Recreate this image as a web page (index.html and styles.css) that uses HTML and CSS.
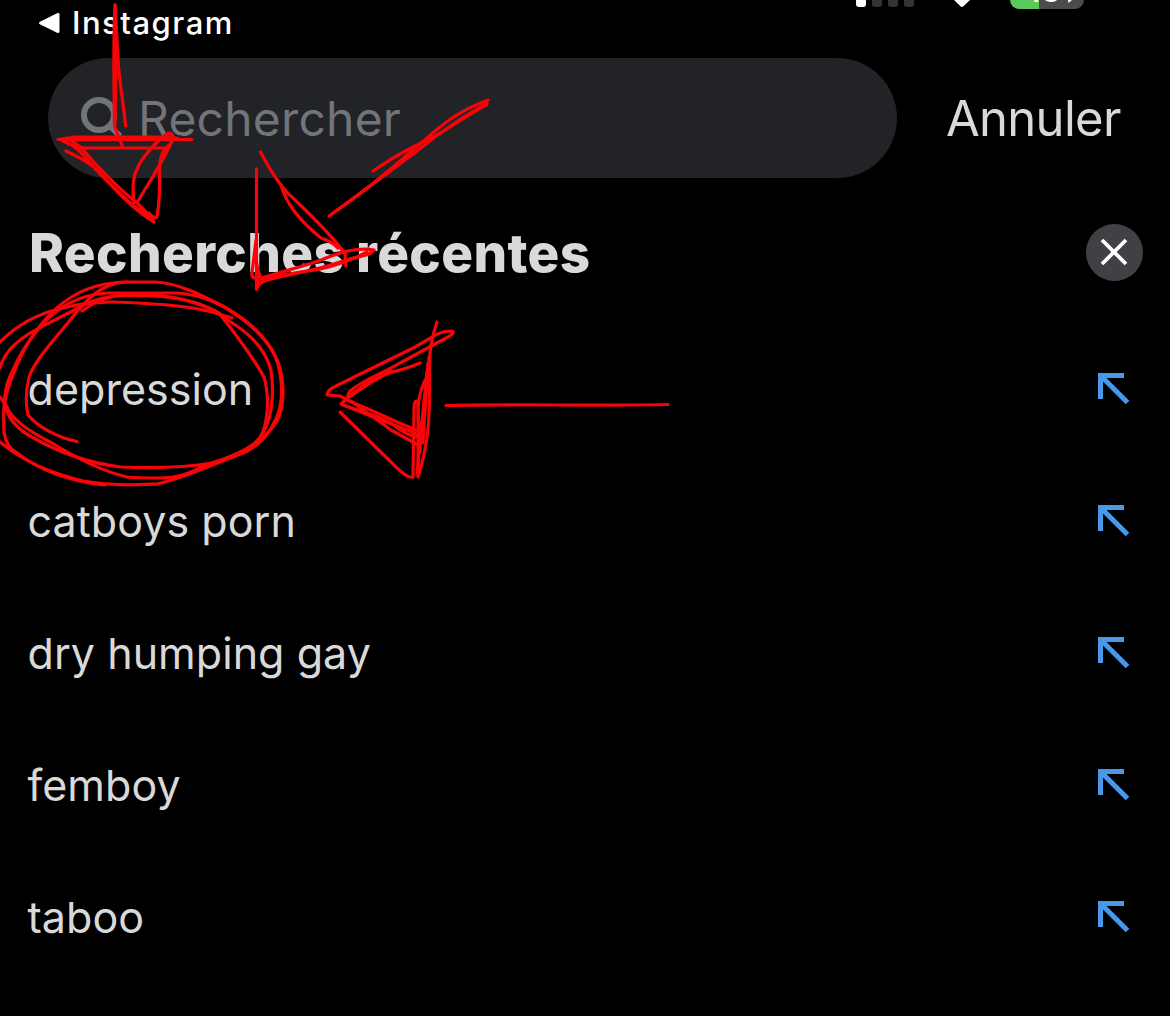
FILE: index.html
```html
<!DOCTYPE html>
<html lang="fr">
<head>
<meta charset="utf-8">
<title>Rechercher</title>
<link rel="stylesheet" href="styles.css">
</head>
<body>
<main class="screen">
  <header class="status">
    <a class="back">
      <svg class="back-icon" width="22" height="22" viewBox="0 0 22 22"><path d="M2 9.700 19 1.200Q21.500 .5 21.500 2.500V19.500Q21.500 21.500 19 20.700L2 12.300Q-.2 11 2 9.700Z" fill="#fff"/></svg>
      <span class="back-label">Instagram</span>
    </a>
    <div class="indicators">
      <div class="signal"><i class="bar on"></i><i class="bar"></i><i class="bar"></i><i class="bar"></i></div>
      <svg class="wifi" width="16" height="8" viewBox="0 0 16 8"><path d="M0 0H16L9.500 6.300Q8 7.800 6.500 6.300Z" fill="#fff"/></svg>
      <div class="battery"><span class="level">43</span><svg class="bolt" width="8" height="4" viewBox="0 0 8 4"><path d="M2 0H6L2.500 3Z" fill="#fff"/></svg></div>
    </div>
  </header>
  <div class="search-row">
    <div class="search">
      <svg class="glass" width="42" height="42" viewBox="0 0 42 42" fill="none" stroke="#717479" stroke-width="6"><circle cx="18" cy="19" r="15"/><path d="M28.500 29.500 39 40"/></svg>
      <span class="placeholder">Rechercher</span>
    </div>
    <span class="cancel">Annuler</span>
  </div>
  <div class="heading">
    <h1 class="title">Recherches récentes</h1>
    <svg class="clear" width="58" height="58" viewBox="0 0 58 58"><circle cx="29.500" cy="29.500" r="28.500" fill="#404145"/><path d="M17 17 41 41M41 17 17 41" stroke="#fff" stroke-width="3.800"/></svg>
  </div>
  <ul class="recent">
    <li class="item"><span class="term">depression</span><svg class="arrow" viewBox="0 0 32 32"><path d="M2.500 26V2.500H26M3.500 3.500 29.500 29.500"/></svg></li>
    <li class="item"><span class="term">catboys porn</span><svg class="arrow" viewBox="0 0 32 32"><path d="M2.500 26V2.500H26M3.500 3.500 29.500 29.500"/></svg></li>
    <li class="item"><span class="term">dry humping gay</span><svg class="arrow" viewBox="0 0 32 32"><path d="M2.500 26V2.500H26M3.500 3.500 29.500 29.500"/></svg></li>
    <li class="item"><span class="term">femboy</span><svg class="arrow" viewBox="0 0 32 32"><path d="M2.500 26V2.500H26M3.500 3.500 29.500 29.500"/></svg></li>
    <li class="item"><span class="term">taboo</span><svg class="arrow" viewBox="0 0 32 32"><path d="M2.500 26V2.500H26M3.500 3.500 29.500 29.500"/></svg></li>
  </ul>
  <svg class="ink" width="1170" height="1016" viewBox="0 0 1170 1016">
    <!-- arrow over the search icon -->
    <path d="M125.500 126C124 105 119 82 118 58L115 4.500C113 45 114 90 114.500 126L119 138 122.500 146"/>
    <path d="M115 6 116 60 115 124"/>
    <path d="M192 139.500H70L58 139.500 75 137H172L178 138.500"/>
    <path d="M66 151C80 158 91 163 99 172C117 192 135 211 154 222L150 217 134 206Q104 180 85 157Q75 145 63 141C72 146 80 149 90 148H165"/>
    <path d="M69 139Q81 146 90 158C104 173 120 190 136 202L153 219"/>
    <path d="M134 203C131 180 135 170 144 157Q158 139 169 133Q175 134 172 141C162 164 147 185 137 203"/>
    <path d="M169 145Q159 153 159.500 169C160 187 160 200 157 217Q153 219 149 213"/>
    <!-- arrow over the search field -->
    <path d="M260.500 152C270 170 280 187 293 198C316 220 335 239 345 254L346 266"/>
    <path d="M281 185C287 207 306 226 321 238Q331 241 338 248"/>
    <path d="M256.500 169V289.500Q258 283 267 280C292 273 315 271 340 262C357 256 371 256 374 250C358 247 340 252 321 260C302 267 280 272 262 278Q251 280 252 273L256 240C255 260 258 272 260 275L257 286"/>
    <path d="M258 280Q290 273 316 270 345 264 367 252"/>
    <path d="M373 171Q395 156 415 146C446 132 465 116 487 104.500"/>
    <path d="M329 216C358 196 386 174 414 149C435 132 450 114 488 100"/>
    <path d="M332 214C370 186 405 161 436 136Q460 119 487 103"/>
    <!-- circle round the first term -->
    <path d="M77 441.500C58 438 38 427 28 415C25 402 26 390 29 377C36 358 57 337 75 314C91 295 103 284 125 282H155C180 283 205 297 226 308C253 323 273 344 280 368C285 390 284 407 277 421C265 441 241 454 212 463C190 472 182 478 161 478C145 478 135 478 127 477C101 471 73 456 52 443C30 432 12 420 7 407L0 397"/>
    <path d="M0 368C4 353 14 344 27 335C43 325 60 318 78 308C97 296 120 294 151 296C183 297 206 305 223 317C246 331 264 345 271 370C274 390 273 416 263 433C252 451 232 458 212 463C182 468 147 468 121 467C87 463 56 451 30 436C13 426 6 414 5 402C7 388 14 370 25 348C39 325 53 308 73 296C90 286 106 282 128 282"/>
    <path d="M0 342Q25 317 59 309C94 299 126 302 153 304C188 306 209 310 232 318"/>
    <path d="M0 442C25 463 52 473 83 481C112 486 130 485 157 484C183 478 211 465 238 455C258 448 269 434 275 421C284 403 283 384 278 364C272 343 254 327 235 314C218 301 195 293 172 293H112C92 293 75 299 61 308C42 321 24 345 13 370C4 386 3 405 4 432Q6 447 17 453C38 469 66 481 105 485"/>
    <path d="M82 311C94 302 110 295 128 295H158Q198 300 219 313C234 332 251 354 264 377C270 398 268 424 260 438C247 455 220 461 199 467"/>
    <!-- arrow right of the first term -->
    <path d="M437 322Q431 340 430 353C428 390 434 427 418 477V402Q414 398 414 410L413 477Q408 479 396 467L340 412"/>
    <path d="M420 363Q403 370 392 372C380 376 362 388 348 398Q345 402 350 391C365 379 385 372 400 363L448 337Q458 331 449 331C437 331 425 343 409 350L336 386Q328 389 327 395L340 396 351 402Q369 409 397 422L423 433"/>
    <path d="M391 371Q366 380 341 404C350 409 376 414 391 423Q406 436 422 438L413 432C388 423 361 412 341 404M351 401 391 430 420 446V452"/>
    <path d="M429 357V373Q419 389 418 408L420 450M428 363 423 443M427 371 417 474"/>
    <path d="M446 405.500C515 404 595 406 668 404.500"/>
  </svg>
</main>
</body>
</html>
```
FILE: styles.css
```css
* { box-sizing: border-box; }
body { margin: 0; background: #000; font-family: Inter, "Liberation Sans", sans-serif; color: #d9d9d9; }
.screen { position: relative; width: 1170px; height: 1016px; overflow: hidden; background: #000; }
.status { height: 58px; display: flex; justify-content: space-between; padding: 0 86px 0 38px; color: #fff; }
.back { display: flex; align-items: flex-start; gap: 12px; }
.back-icon { margin-top: 12px; }
.back-label { font-size: 31px; font-weight: 500; line-height: 38px; margin-top: 4px; letter-spacing: 1.5px; }
.indicators { display: flex; align-items: flex-start; }
.signal { display: flex; gap: 6px; margin-right: 40px; }
.bar { width: 10px; height: 7px; background: #343434; border-radius: 0 0 3px 3px; }
.bar.on { background: #fff; }
.wifi { margin-right: 40px; }
.battery { display: flex; align-items: flex-start; width: 74px; height: 9px; border-radius: 0 0 11px 11px; background: linear-gradient(90deg, #5ac85a 29px, #4b4b4d 29px); overflow: hidden; padding-left: 13px; }
.level { font-size: 28px; font-weight: 700; line-height: 34px; margin-top: -25px; width: 43px; }
.search-row { display: flex; align-items: center; height: 120px; padding-left: 48px; gap: 49px; }
.search { display: flex; align-items: center; width: 849px; height: 120px; border-radius: 60px; background: #222327; padding-left: 33px; }
.glass { flex: none; margin-top: -3px; }
.placeholder { color: #717479; font-size: 48px; line-height: 58px; margin-left: 15px; margin-top: 2px; white-space: nowrap; letter-spacing: .2px; }
.cancel { font-size: 49px; line-height: 58px; white-space: nowrap; margin-top: 1px; letter-spacing: -.7px; }
.heading { display: flex; align-items: center; justify-content: space-between; height: 144px; padding: 0 27px 0 29px; }
.title { margin: 6px 0 0; font-size: 53px; line-height: 62px; font-weight: 800; letter-spacing: .35px; white-space: nowrap; }
.clear { margin-top: 4px; }
.recent { list-style: none; margin: 0; padding: 0; }
.item { display: flex; align-items: center; justify-content: space-between; height: 132px; padding: 0 40px 0 27.5px; }
.term { font-size: 43px; line-height: 52px; white-space: nowrap; margin-top: 2px; letter-spacing: .05px; }
.arrow { width: 32px; height: 32px; margin-top: 2px; fill: none; stroke: #4a99e9; stroke-width: 5; }
.ink { position: absolute; left: 0; top: 0; fill: none; stroke: #f80408; stroke-width: 3.2; stroke-linecap: round; stroke-linejoin: round; pointer-events: none; }
```
